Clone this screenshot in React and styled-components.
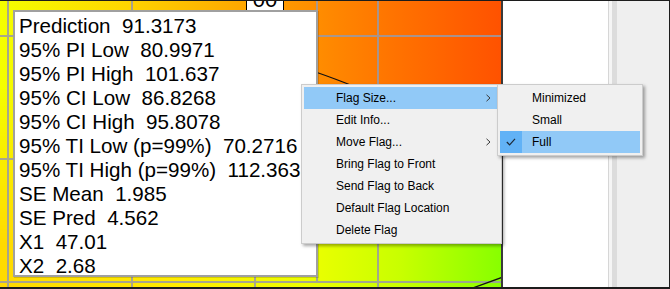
import React from 'react';
import styled, { createGlobalStyle } from 'styled-components';

const GlobalStyle = createGlobalStyle`
  body {
    margin: 0;
    background: #ffffff;
  }
`;

const Frame = styled.div`
  position: relative;
  display: flex;
  width: 670px;
  height: 289px;
  box-sizing: border-box;
  border-top: 1px solid #1c1c1c;
  border-right: 1px solid #1c1c1c;
  border-bottom: 2px solid #1c1c1c;
  overflow: hidden;
  font-family: 'Liberation Sans', Arial, sans-serif;
`;

const Plot = styled.div`
  position: relative;
  width: 501px;
  height: 100%;
  border-right: 2px solid #3a3a3a;
  overflow: hidden;

  > svg {
    display: block;
  }
`;

const WhiteArea = styled.div`
  width: 105px;
  background: #ffffff;
`;

const Splitter = styled.div`
  width: 8px;
  border-left: 1px solid #d6d6d6;
  background: linear-gradient(to right, #f5f5f5 0 3px, #dcdcdc 3px);
`;

const SidePanel = styled.div`
  flex: 1;
  background: #efefef;
`;

const ContourLabel = styled.div`
  position: absolute;
  left: 246px;
  top: -10px;
  width: 38px;
  height: 21px;
  box-sizing: border-box;
  border: 1px solid #000;
  background: #fff;
  font-size: 22px;
  line-height: 16px;
  text-align: center;
  color: #000;
  overflow: hidden;
`;

const FlagBox = styled.div`
  position: absolute;
  left: 13px;
  top: 9px;
  width: 305px;
  height: 267px;
  box-sizing: border-box;
  border: 2px solid #a0a0a0;
  background: #ffffff;
  padding: 2px 0 0 4px;
  overflow: hidden;
  box-shadow: 1px 1px 0 rgba(0, 0, 0, 0.15);
`;

const FlagLine = styled.div`
  font-size: 20.6px;
  line-height: 24px;
  color: #000;
  white-space: pre;
`;

const Menu = styled.div`
  position: absolute;
  left: ${({ $left }) => $left}px;
  top: 83px;
  width: ${({ $width }) => $width}px;
  box-sizing: border-box;
  padding: 2px;
  border: 1px solid #cccccc;
  background: #f0f0f0;
  box-shadow: 2px 2px 3px rgba(0, 0, 0, 0.35);
`;

const MenuItem = styled.div`
  display: flex;
  align-items: center;
  height: 22px;
  padding: 0 8px 0 0;
  background: ${({ $active }) => ($active ? '#91c9f7' : 'transparent')};
  font-size: 12px;
  color: #000;
`;

const Gutter = styled.div`
  display: flex;
  align-items: center;
  justify-content: center;
  width: 22px;
  height: 100%;
  margin-right: 10px;
  background: ${({ $checked }) => ($checked ? '#62b2f6' : 'transparent')};
`;

const Label = styled.span`
  flex: 1;
`;

const Chevron = () => (
  <svg width="5" height="8" viewBox="0 0 5 8">
    <polyline points="0.5,0.8 4,4 0.5,7.2" fill="none" stroke="#3a3a3a" strokeWidth="1" />
  </svg>
);

const Check = () => (
  <svg width="10" height="8" viewBox="0 0 10 8">
    <polyline points="0.8,4 3.6,6.8 9,0.8" fill="none" stroke="#1e2a38" strokeWidth="1.2" />
  </svg>
);

const flagLines = [
  'Prediction  91.3173',
  '95% PI Low  80.9971',
  '95% PI High  101.637',
  '95% CI Low  86.8268',
  '95% CI High  95.8078',
  '95% TI Low (p=99%)  70.2716',
  '95% TI High (p=99%)  112.363',
  'SE Mean  1.985',
  'SE Pred  4.562',
  'X1  47.01',
  'X2  2.68'
];

const menuItems = [
  { label: 'Flag Size...', sub: true, active: true },
  { label: 'Edit Info...' },
  { label: 'Move Flag...', sub: true },
  { label: 'Bring Flag to Front' },
  { label: 'Send Flag to Back' },
  { label: 'Default Flag Location' },
  { label: 'Delete Flag' }
];

const sizeItems = [
  { label: 'Minimized' },
  { label: 'Small' },
  { label: 'Full', checked: true }
];

const Surface = () => (
  <svg width="501" height="286" viewBox="0 0 501 286">
    <defs>
      <linearGradient id="topRow" x1="0" y1="0" x2="1" y2="0">
        <stop offset="0" stopColor="#f4ff00" />
        <stop offset="0.25" stopColor="#ffd600" />
        <stop offset="0.48" stopColor="#ffa800" />
        <stop offset="0.66" stopColor="#ff8800" />
        <stop offset="0.78" stopColor="#ff7400" />
        <stop offset="1" stopColor="#ff5200" />
      </linearGradient>
      <linearGradient id="bottomRow" x1="0" y1="0" x2="1" y2="0">
        <stop offset="0" stopColor="#ffda00" />
        <stop offset="0.35" stopColor="#ffec00" />
        <stop offset="0.62" stopColor="#ecff00" />
        <stop offset="0.8" stopColor="#c8ff00" />
        <stop offset="1" stopColor="#88ff00" />
      </linearGradient>
      <linearGradient id="fade" x1="0" y1="0" x2="0" y2="1">
        <stop offset="0.3" stopColor="#fff" stopOpacity="0" />
        <stop offset="0.85" stopColor="#fff" stopOpacity="1" />
      </linearGradient>
      <mask id="fadeMask">
        <rect width="501" height="286" fill="url(#fade)" />
      </mask>
    </defs>
    <rect width="501" height="286" fill="url(#topRow)" />
    <rect width="501" height="286" fill="url(#bottomRow)" mask="url(#fadeMask)" />
    <g stroke="#9a9aa6" strokeWidth="2" opacity="0.85">
      <line x1="8" y1="0" x2="8" y2="286" />
      <line x1="132" y1="0" x2="132" y2="286" />
      <line x1="255" y1="0" x2="255" y2="286" />
      <line x1="317" y1="0" x2="317" y2="281" />
      <line x1="378" y1="0" x2="378" y2="286" />
      <line x1="0" y1="35" x2="501" y2="35" />
      <line x1="0" y1="158" x2="501" y2="158" />
      <line x1="0" y1="281" x2="501" y2="281" />
    </g>
    <g fill="none" stroke="#111" strokeWidth="1.3">
      <path d="M 300 66 Q 330 75 380 96" />
      <path d="M 470 288 L 503 276" />
    </g>
  </svg>
);

const App = () => {
  return (
    <>
      <GlobalStyle />
      <Frame>
        <Plot>
          <Surface />
          <ContourLabel>00</ContourLabel>
        </Plot>
        <WhiteArea />
        <Splitter />
        <SidePanel />

        <FlagBox>
          {flagLines.map((line) => (
            <FlagLine key={line}>{line}</FlagLine>
          ))}
        </FlagBox>

        <Menu $left={301} $width={201}>
          {menuItems.map((item) => (
            <MenuItem key={item.label} $active={item.active}>
              <Gutter />
              <Label>{item.label}</Label>
              {item.sub && <Chevron />}
            </MenuItem>
          ))}
        </Menu>

        <Menu $left={497} $width={146}>
          {sizeItems.map((item) => (
            <MenuItem key={item.label} $active={item.checked}>
              <Gutter $checked={item.checked}>{item.checked && <Check />}</Gutter>
              <Label>{item.label}</Label>
            </MenuItem>
          ))}
        </Menu>
      </Frame>
    </>
  );
};

export default App;
